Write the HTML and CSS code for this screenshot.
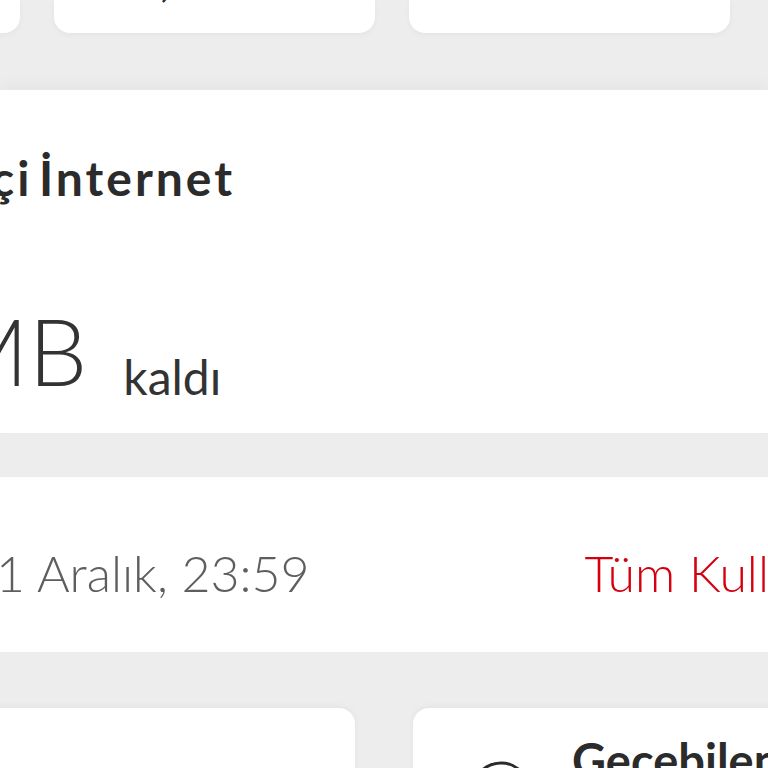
FILE: index.html
```html
<!DOCTYPE html>
<html lang="tr">
<head>
    <meta charset="UTF-8">
    <meta name="viewport" content="width=device-width, initial-scale=1.0">
    <title>Paketlerim</title>
    <link rel="stylesheet" href="styles.css">
</head>
<body>
    <div class="page">
        <!-- top tiles (scrolled up) -->
        <div class="top-row">
            <div class="tile"></div>
            <div class="tile"><span class="tile-text">1,5 GB</span></div>
            <div class="tile"></div>
        </div>

        <!-- usage card -->
        <div class="usage-card">
            <h2 class="usage-title">Yurtiçi İnternet</h2>
            <div class="usage-amount">
                <span class="amount">750 MB</span>
                <span class="left">kaldı</span>
            </div>
        </div>

        <!-- renewal row -->
        <div class="date-card">
            <span class="date">31 Aralık, 23:59</span>
            <a class="all-link" href="#">Tüm Kullanımlar</a>
        </div>

        <!-- bottom tiles -->
        <div class="bottom-row">
            <div class="tile-bottom"></div>
            <div class="tile-bottom tile-offer">
                <svg class="offer-icon" width="62" height="62" viewBox="0 0 62 62">
                    <circle cx="31" cy="31" r="28" fill="none" stroke="#2b2b2b" stroke-width="3"/>
                </svg>
                <span class="offer-title">Gecebilen Paket</span>
            </div>
        </div>
    </div>
</body>
</html>
```

FILE: styles.css
```css
body {
    margin: 0;
    background: #eeeded;
    font-family: Lato, "Noto Sans", sans-serif;
    color: #2b2b2b;
    overflow: hidden;
}

.page {
    width: 768px;
    height: 768px;
    overflow: hidden;
    display: flex;
    flex-direction: column;
}

.top-row {
    display: flex;
    gap: 34px;
    margin-left: -301px;
    height: 33px;
    flex: none;
}

.tile {
    width: 321px;
    flex: none;
    background: #fff;
    border-radius: 0 0 16px 16px;
    box-shadow: 0 2px 6px rgba(0, 0, 0, 0.04);
    overflow: hidden;
}

.tile-text {
    display: block;
    margin-top: -40px;
    margin-left: 83px;
    font-size: 40px;
    font-weight: 700;
    line-height: 44px;
}

.usage-card {
    margin-top: 57px;
    height: 343px;
    flex: none;
    background: #fff;
    box-shadow: 0 -6px 14px rgba(0, 0, 0, 0.035);
    overflow: hidden;
}

.usage-title {
    margin: 0;
    margin-top: 58px;
    margin-left: -126px;
    font-size: 48px;
    font-weight: 700;
    letter-spacing: 3px;
    word-spacing: -8px;
    line-height: 60px;
    white-space: nowrap;
}

.usage-amount {
    display: flex;
    align-items: flex-end;
    gap: 36px;
    margin-top: 92px;
    margin-left: -243px;
    white-space: nowrap;
}

.amount {
    font-size: 93px;
    font-weight: 300;
    line-height: 100px;
    color: #333;
}

.left {
    font-size: 48px;
    line-height: 47px;
    color: #333;
}

.date-card {
    margin-top: 44px;
    height: 175px;
    flex: none;
    background: #fff;
    display: flex;
    align-items: center;
    justify-content: space-between;
    padding-top: 16px;
    box-sizing: border-box;
    white-space: nowrap;
    overflow: hidden;
}

.date {
    font-size: 50px;
    font-weight: 300;
    color: #5e5e5e;
    margin-left: -33px;
}

.all-link {
    font-size: 50px;
    font-weight: 300;
    color: #d4000f;
    text-decoration: none;
    margin-right: -157px;
}

.bottom-row {
    display: flex;
    gap: 58px;
    margin-top: 56px;
    margin-left: -40px;
    height: 80px;
    flex: none;
}

.tile-bottom {
    width: 395px;
    flex: none;
    background: #fff;
    border-radius: 16px 16px 0 0;
    box-shadow: 0 -2px 6px rgba(0, 0, 0, 0.04);
}

.tile-offer {
    display: flex;
    align-items: flex-start;
    gap: 40px;
    padding-left: 57px;
    padding-top: 22px;
    box-sizing: border-box;
    white-space: nowrap;
}

.offer-icon {
    flex: none;
    margin-top: 30px;
}

.offer-title {
    font-size: 47px;
    font-weight: 700;
    line-height: 60px;
}
```
